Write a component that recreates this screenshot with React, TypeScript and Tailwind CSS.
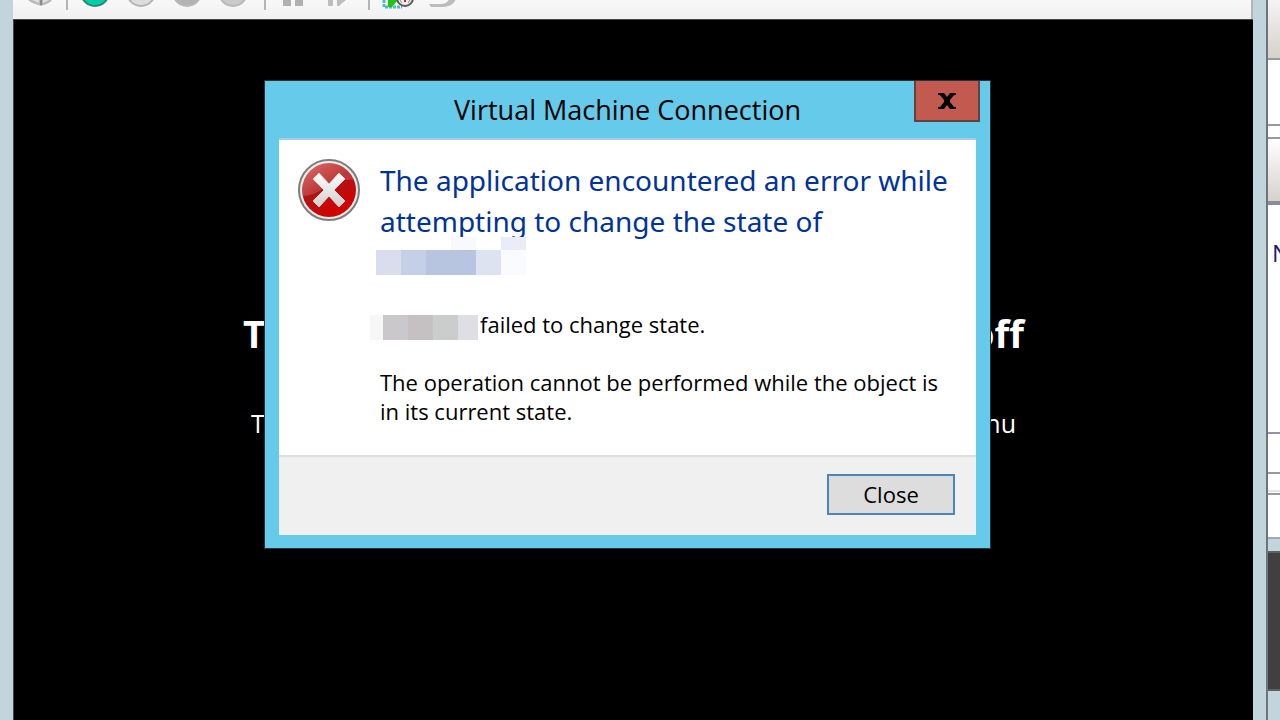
import React from 'react';

const toolbarDots = [
  { id: 'start', fill: '#00cfa6', edge: '#2a8873' },
  { id: 'turn-off', fill: '#dcdcdc', edge: '#b4b4b4' },
  { id: 'shut-down', fill: '#b3b3b3', edge: '#b8b8b8' },
  { id: 'save', fill: '#cacaca', edge: '#b8b8b8' },
];

const headingMosaicTop = [
  'bg-transparent',
  'bg-transparent',
  'bg-transparent',
  'bg-[#f8f9fd]',
  'bg-transparent',
  'bg-[#eaedf7]',
];

const headingMosaic = [
  'bg-[#dadded]',
  'bg-[#c4d0e8]',
  'bg-[#b8c5e0]',
  'bg-[#b8c5e0]',
  'bg-[#dde3f1]',
  'bg-[#fafbfe]',
];

const nameMosaic = ['bg-[#cac8ca]', 'bg-[#c5c1c3]', 'bg-[#cbcdcc]'];

const Separator: React.FC = () => <div className="h-[10px] w-[2px] bg-[#b5b5b5]" />;

const Toolbar: React.FC = () => (
  <div className="flex h-[19px] items-start border-r-2 border-[#b5b5b5] bg-linear-to-b from-[#f8f8f8] to-[#f0f0f0] pl-[14px]">
    <svg width="28" height="8" viewBox="0 0 28 8">
      <path d="M1 0h24c-2 3-6 4-11 6C9 4 4 3 1 0z" fill="#b9b9b9" />
      <path d="M5 0l7 3V0zM16 0v3l6-3z" fill="#dedede" />
      <path d="M14 0v5" stroke="#8a8a8a" strokeWidth="2" />
    </svg>
    <div className="ml-[11px]">
      <Separator />
    </div>
    <div className="ml-[13px] flex gap-[18px]">
      {toolbarDots.map((dot) => (
        <svg key={dot.id} width="28" height="8" viewBox="0 0 28 8">
          <circle cx="14" cy="-8" r="14" fill={dot.fill} stroke={dot.edge} strokeWidth="2" />
        </svg>
      ))}
    </div>
    <div className="ml-[17px]">
      <Separator />
    </div>
    <svg className="ml-[17px]" width="20" height="7" viewBox="0 0 20 7">
      <path d="M0 0h8v6H0zM12 0h8v6h-8z" fill="#b0b0b0" />
    </svg>
    <svg className="ml-[25px]" width="20" height="7" viewBox="0 0 20 7">
      <path d="M0 0h5v6H0z" fill="#bdbdbd" />
      <path d="M9 0h9l-5 4-2 2H9z" fill="#bdbdbd" />
    </svg>
    <div className="ml-[20px]">
      <Separator />
    </div>
    <svg className="ml-[11px]" width="34" height="9" viewBox="0 0 34 9">
      <path d="M3 0v7h18" fill="none" stroke="#58b8c8" strokeWidth="3" strokeDasharray="3 1" />
      <path d="M7 0h10l-6 7H7z" fill="#22c516" />
      <circle cx="24" cy="-2" r="8" fill="#f2f2f2" stroke="#5a5a5a" strokeWidth="2" />
      <path d="M24 0v2" stroke="#d02020" strokeWidth="2" />
      <path d="M19 0l2 3M29 0l-2 3" stroke="#8a8a8a" />
    </svg>
    <svg className="ml-[14px]" width="30" height="9" viewBox="0 0 30 9">
      <path d="M0 4h12c4 0 7-2 8-5h7c-2 5-7 8-14 8H2z" fill="#bcbcbc" />
    </svg>
  </div>
);

const ErrorIcon: React.FC = () => (
  <svg className="shrink-0" width="62" height="62" viewBox="0 0 62 62">
    <defs>
      <linearGradient id="red" x1="0" y1="0" x2="0.6" y2="1">
        <stop offset="0" stopColor="#d9534f" />
        <stop offset="0.5" stopColor="#b01414" />
        <stop offset="1" stopColor="#d40000" />
      </linearGradient>
      <linearGradient id="cross" x1="0" y1="0" x2="0" y2="1">
        <stop offset="0" stopColor="#ffffff" />
        <stop offset="1" stopColor="#cfcfcf" />
      </linearGradient>
    </defs>
    <circle cx="31" cy="31" r="30" fill="#ececec" stroke="#7c7c7c" strokeWidth="2" />
    <circle cx="31" cy="31" r="27" fill="url(#red)" />
    <path d="M4 37A27 27 0 0 1 56 21C44 20 34 23 26 29 19 34 12 37 4 37z" fill="#ffffff" fillOpacity="0.16" />
    <path
      d="M21 14l10 11 10-11 6 6-11 11 11 11-6 6-10-11-10 11-6-6 11-11-11-11z"
      fill="url(#cross)"
      stroke="#e4d4d4"
      strokeLinejoin="round"
    />
  </svg>
);

const ErrorDialog: React.FC = () => (
  <section
    role="dialog"
    aria-labelledby="dialog-title"
    className="absolute top-[80px] left-[264px] w-[727px] border border-[#2b3337] bg-[#66caea] px-[14px] pb-[13px] text-black"
  >
    <header className="relative flex h-[57px] items-center justify-center">
      <h1 id="dialog-title" className="text-[27px] leading-[36px]">
        Virtual Machine Connection
      </h1>
      <button
        type="button"
        aria-label="Close window"
        className="absolute top-0 -right-[4px] flex h-[41px] w-[66px] items-center justify-center border-2 border-t-0 border-[#64403f] bg-[#c35a50]"
      >
        <svg width="18" height="16" viewBox="0 0 18 16">
          <path
            d="M0 0h6l3 4 3-4h6v2h-2l-4 5v2l4 5h2v2h-6l-3-4-3 4H0v-2h2l4-5V7L2 2H0z"
            fill="#000000"
          />
        </svg>
      </button>
    </header>
    <div className="border-t-2 border-[#9fcfe4] bg-white">
      <div className="flex h-[315px] gap-[20px] px-[19px] pt-[19px]">
        <ErrorIcon />
        <div className="pt-[1px]">
          <h2 className="font-['Noto_Sans','Open_Sans',sans-serif] text-[28px] leading-[41px] text-[#003399]">
            The application encountered an error while
            <br />
            attempting to change the state of
          </h2>
          <div className="relative -mt-[5px] -ml-[4px]">
            <div className="flex">
              {headingMosaicTop.map((shade, i) => (
                <div key={i} className={`h-[13px] w-[25px] ${shade}`} />
              ))}
            </div>
            <div className="flex">
              {headingMosaic.map((shade, i) => (
                <div key={i} className={`h-[25px] w-[25px] ${shade}`} />
              ))}
            </div>
          </div>
          <div className="mt-[35px] -ml-[10px] flex h-[29px] items-start">
            <div className="flex pt-[5px]">
              <div className="h-[25px] w-[13px] bg-[#f7f7f7]" />
              {nameMosaic.map((shade, i) => (
                <div key={i} className={`h-[25px] w-[25px] ${shade}`} />
              ))}
              <div className="h-[25px] w-[20px] bg-[#dfdee5]" />
            </div>
            <p className="ml-[2px] text-[22px] leading-[29px]">failed to change state.</p>
          </div>
          <p className="mt-[29px] text-[22px] leading-[29px]">
            The operation cannot be performed while the object is
            <br />
            in its current state.
          </p>
        </div>
      </div>
      <footer className="flex h-[80px] items-center justify-end border-t-2 border-[#dfdfdf] bg-[#f0f0f0] pr-[21px] pb-[4px]">
        <button
          type="button"
          className="h-[41px] w-[128px] border-2 border-[#4a86b8] bg-[#dddddd] text-[22px] leading-[29px]"
        >
          Close
        </button>
      </footer>
    </div>
  </section>
);

const BackgroundWindow: React.FC = () => (
  <aside className="flex w-[14px] shrink-0 flex-col border-l-2 border-[#6d757b] bg-[#c3d5dc]">
    <div className="h-[60px] border-b-2 border-[#999999] bg-linear-to-b from-[#f4f4f4] to-[#d6d2ca]" />
    <div className="h-[66px] border-b-2 border-[#999999] bg-white" />
    <div className="h-[13px] border-b-2 border-[#999999] bg-white" />
    <div className="h-[66px] border-b-4 border-[#8b8c96] bg-linear-to-b from-white to-[#d6d2ca]" />
    <div className="h-[229px] overflow-hidden border-b-2 border-[#9494a4] bg-white pt-[32px] pl-[4px] text-[24px] leading-[32px] text-[#1c1c70]">
      N
    </div>
    <div className="h-[40px] border-b-2 border-[#999999] bg-white" />
    <div className="h-[18px] border-b-2 border-[#e4e4e4] bg-white" />
    <div className="h-[3px] border-b-2 border-[#999999] bg-white" />
    <div className="h-[44px] border-b-2 border-[#a6a6a6] bg-white" />
    <div className="mt-[12px] h-[140px] border-y-2 border-[#5b5f66] bg-[#404040]" />
  </aside>
);

const App: React.FC = () => {
  return (
    <div className="relative flex min-h-screen overflow-hidden bg-[#c3d5dc] pl-[13px] font-['Open_Sans','Noto_Sans',sans-serif]">
      <main className="flex flex-1 flex-col">
        <Toolbar />
        <div className="flex-1 border-t border-l border-[#444444] bg-black px-[229px] pt-[289px] text-white">
          <p className="flex justify-between text-[38px] leading-[48px] font-bold">
            <span>The</span>
            <span>off</span>
          </p>
          <p className="mt-[50px] flex justify-between px-[8px] text-[25px] leading-[32px]">
            <span>To</span>
            <span>menu</span>
          </p>
        </div>
      </main>
      <div className="w-[13px] shrink-0" />
      <BackgroundWindow />
      <ErrorDialog />
    </div>
  );
};

export default App;
